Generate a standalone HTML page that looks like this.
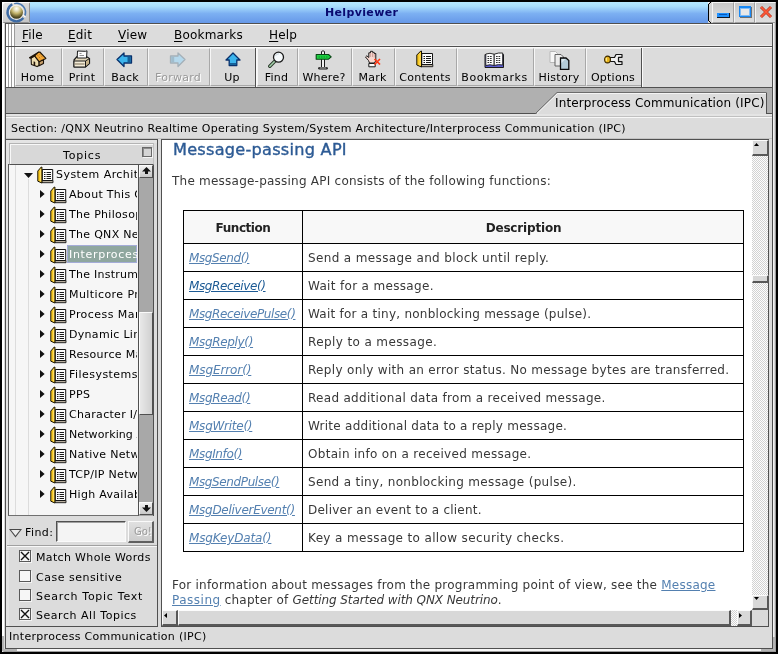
<!DOCTYPE html>
<html><head><meta charset="utf-8"><title>Helpviewer</title><style>

*{box-sizing:border-box;margin:0;padding:0}
html,body{width:778px;height:654px;overflow:hidden;background:#000}
body{will-change:transform;font-family:"DejaVu Sans","Liberation Sans",sans-serif;font-size:11.5px;color:#000;position:relative}
div,span,svg{position:absolute}
.t{white-space:nowrap;line-height:1}
#frame{left:2px;top:2px;width:774px;height:650px;background:#d8d8d8;border-left:2px solid #fff;border-top:1px solid #fff;border-right:1px solid #9c9c9c;border-bottom:1px solid #9c9c9c}
#inner{left:5px;top:23px;width:768px;height:626px;background:#dcdcdc;border:1px solid #505050}
#title{left:30px;top:2px;width:678px;height:21px;background:linear-gradient(#b6e8ff 0%,#aadefc 20%,#7cb0f2 55%,#6698e8 100%)}
#title .t{left:295px;top:5px;font-weight:bold;font-size:11px;letter-spacing:.35px;color:#0a0a70}
.mi{top:29px;font-size:12px;letter-spacing:.2px}
.mi u{text-decoration:underline;text-underline-offset:2px;text-decoration-thickness:1px}
.tb{top:48px;height:38px;border-left:1px solid #f6f6f6;border-top:1px solid #f0f0f0;border-right:1px solid #a8a8a8;border-bottom:1px solid #a8a8a8;background:#dadada}
.tb .t{left:-1px;right:1px;top:23px;text-align:center;font-size:11px;letter-spacing:.25px}
.tb.dis .t{color:#9a9a9a;text-shadow:1px 1px 0 #fff}
.tb svg{top:2px;left:50%;margin-left:-10px;width:20px;height:18px}

#band{left:6px;top:88px;width:766px;height:25px;background:#b0b0b0}
.book{width:18px;height:18px}
.row{left:0;height:20px;width:127px;overflow:hidden}
.row .t{top:5px;font-size:11px;letter-spacing:.1px}
.chk{width:12px;height:12px;left:19px;background:#f6f6f6;border:1px solid #585858;box-shadow:1px 1px 0 #f4f4f4}
.cl{left:36px;font-size:11px;letter-spacing:.3px}
#doc{left:162px;top:140px;width:590px;height:470px;background:#fff;overflow:hidden;font-size:12px;letter-spacing:.23px;color:#383838}
#doc a{color:#5480b0;text-decoration:underline}
#doc .fn{font-style:italic;font-size:12px;left:27px;letter-spacing:-.38px}
#doc .ds{left:146px;font-size:12px}
.hl{height:1px;background:#000;left:21px;width:560px}
.sb2{background:#d8d8d8;border-top:1px solid #fcfcfc;border-left:1px solid #fcfcfc;border-right:2px solid #585858;border-bottom:2px solid #585858}
.sbtn{background:#dcdcdc;border:1px solid #fafafa;border-right-color:#505050;border-bottom-color:#505050}
</style></head><body>
<div id="frame"></div>
<div style="left:773px;top:23px;width:1px;height:614px;background:#f4f4f4"></div>
<div style="left:17px;top:649px;width:744px;height:2px;background:#f8f8f8"></div>
<div style="left:2px;top:636px;width:2px;height:15px;background:#b4b4b4"></div>
<div style="left:2px;top:649px;width:15px;height:2px;background:#b4b4b4"></div>
<div style="left:761px;top:649px;width:14px;height:2px;background:#b4b4b4"></div>
<div style="left:773px;top:637px;width:2px;height:13px;background:#b4b4b4"></div>
<div id="iconbox" style="left:2px;top:2px;width:28px;height:21px;background:linear-gradient(160deg,#e4e4e4,#d0d0d0 60%,#c4c4c4);border:1px solid #fcfcfc;border-right-color:#909090;border-bottom-color:#909090;border-radius:3px 2px 2px 2px"><svg style="left:-1px;top:-1px" width="28" height="21" viewBox="0 0 28 21"><defs><radialGradient id="orb" cx="50%" cy="22%" r="75%"><stop offset="0" stop-color="#ffffff"/><stop offset=".22" stop-color="#e8e4c8"/><stop offset=".5" stop-color="#c4b46c"/><stop offset=".8" stop-color="#6c6230"/><stop offset="1" stop-color="#3c3818"/></radialGradient><filter id="bl" x="-20%" y="-20%" width="140%" height="140%"><feGaussianBlur stdDeviation=".45"/></filter></defs><g filter="url(#bl)"><path d="M10.270 2.350 A9 9 0 1 0 21.390 16.090" fill="none" stroke="#3c6aa4" stroke-width="2.300"/><path d="M12.170 1.610 A9 9 0 0 1 22.660 14.100" fill="none" stroke="#4a78b0" stroke-width="1.500"/><path d="M20.500 12.500 L23.500 15" stroke="#fff" stroke-width="1.200"/><circle cx="14.500" cy="10.300" r="7.300" fill="#f4f4f4"/></g><circle cx="14.500" cy="10.300" r="6.500" fill="url(#orb)"/></svg></div>
<div id="title"><span class="t">Helpviewer</span></div>
<div style="left:709px;top:2px;width:67px;height:21px;background:#d4d4d4"></div>
<div style="left:708px;top:4px;width:1px;height:17px;background:#000"></div><div style="left:709px;top:3px;width:1px;height:1px;background:#000"></div><div style="left:710px;top:2px;width:1px;height:1px;background:#000"></div><div style="left:709px;top:21px;width:1px;height:1px;background:#000"></div><div style="left:710px;top:22px;width:1px;height:1px;background:#000"></div>
<div style="left:711px;top:2px;width:65px;height:21px;background:#d4d4d4"></div>
<div style="left:712px;top:2px;width:22px;height:21px;border:1px solid #f4f4f4;border-right-color:#a0a0a0;border-bottom-color:#a0a0a0;background:linear-gradient(#c8c8c8,#dedede)">
<div style="left:4px;top:10px;width:13px;height:5px;background:#1e90ff;border-bottom:1px solid #101828;border-right:1px solid #101828"><div style="left:2px;top:1px;width:8px;height:1px;background:#0a58b8"></div></div>
</div>
<div style="left:734px;top:2px;width:21px;height:21px;border:1px solid #f4f4f4;border-right-color:#a0a0a0;border-bottom-color:#a0a0a0;background:linear-gradient(#c8c8c8,#dedede)">
<div style="left:4px;top:3px;width:12px;height:11px;background:#e8e8e8;border:1px solid #1888f4;border-top-width:2px;box-shadow:1px 1px 0 #707070,inset 0 0 0 1px rgba(40,150,255,.55)"></div>
</div>
<div style="left:755px;top:2px;width:21px;height:21px;border:1px solid #f4f4f4;border-right-color:#a0a0a0;border-bottom-color:#a0a0a0;background:linear-gradient(#c8c8c8,#dedede)">
<svg style="left:3px;top:2px" width="14" height="14" viewBox="0 0 14 14"><path d="M2 2 L12 12 M12 2 L2 12" stroke="#b03820" stroke-width="3"/><path d="M2 2 L12 12 M12 2 L2 12" stroke="#ff5838" stroke-width="1.700"/></svg>
</div>
<div id="inner"></div>
<div style="left:6px;top:24px;width:766px;height:22px;background:#dcdcdc;border-top:1px solid #fafafa;border-bottom:1px solid #ececec"></div>
<div style="left:6px;top:46px;width:766px;height:1px;background:#505050"></div>
<div style="left:6px;top:47px;width:766px;height:1px;background:#fafafa"></div>
<div style="left:6px;top:24px;width:9px;height:22px;background:repeating-linear-gradient(90deg,#fff 0,#fff 2px,#9c9c9c 2px,#9c9c9c 3px)"></div>
<div style="left:6px;top:47px;width:9px;height:40px;background:repeating-linear-gradient(90deg,#fff 0,#fff 2px,#9c9c9c 2px,#9c9c9c 3px)"></div>
<div class="mi t" style="left:22px"><u>F</u>ile</div>
<div class="mi t" style="left:68px"><u>E</u>dit</div>
<div class="mi t" style="left:118px"><u>V</u>iew</div>
<div class="mi t" style="left:174px"><u>B</u>ookmarks</div>
<div class="mi t" style="left:269px"><u>H</u>elp</div>
<div style="left:15px;top:48px;width:757px;height:39px;background:#dcdcdc"></div>
<div style="left:6px;top:87px;width:766px;height:1px;background:#505050"></div>
<div class="tb" style="left:15px;width:47px"><span class="t">Home</span></div>
<svg style="left:29px;top:51px" width="18" height="17" viewBox="0 0 18 17"><path d="M2.100 7.100 L5.600 5 L10.100 10.500 L10.100 14.500 L8.100 15.600 L2.400 13.500 Z" fill="#ecdcb0" stroke="#1a1208" stroke-width="1.100" stroke-linejoin="round"/><path d="M10.100 10.500 L14.500 8.300 L14.500 12.500 L10.100 14.800 Z" fill="#c8a06c" stroke="#1a1208" stroke-width="1.100" stroke-linejoin="round"/><path d="M4.600 10.300 L6.200 11 L6.200 15 L4.600 14.300 Z" fill="#20140a"/><path d="M9.500 1.200 L10.800 1 L16.900 7.400 L10.100 10.700 L5.400 4.700 Z" fill="#f4aa38" stroke="#1a1208" stroke-width="1.100" stroke-linejoin="round"/><path d="M0.400 6.800 L9.500 1.200 L5.600 4.900 L1.700 7.300 Z" fill="#f4b040" stroke="#1a1208" stroke-width="1.100" stroke-linejoin="round"/><path d="M8 3.500 L12.500 8.800 M10.300 2.800 L14.800 7.600" stroke="#b87018" stroke-width=".9" stroke-dasharray="1.800 1"/></svg>
<div class="tb" style="left:62px;width:42px"><span class="t">Print</span></div>
<svg style="left:72px;top:50px" width="19" height="18" viewBox="0 0 19 18"><path d="M2 10 L5 6.500 L14.500 6.500 L17.500 8.500 L17.500 13.500 L13.500 17 L2 17 Z" fill="#e4d8bc" stroke="#1a1a1a" stroke-width="1.200"/><path d="M13.500 11 L17.500 8.500 L17.500 13.500 L13.500 17 Z" fill="#c8b48c" stroke="#1a1a1a" stroke-width="1"/><path d="M2 11 L13.500 11 L13.500 17 L2 17 Z" fill="#f4ecd8" stroke="#1a1a1a" stroke-width="1"/><path d="M3 14 L12.500 14" stroke="#8a8068" stroke-width="1.200"/><path d="M5.500 1 L13.500 1.300 L15 0.800 L14.500 8 L5.200 8 Z" fill="#fcfcfc" stroke="#1a1a1a" stroke-width="1"/><path d="M7.500 3.500 h2 M7.500 5.500 h4.500" stroke="#909090" stroke-width="1"/></svg>
<div class="tb" style="left:104px;width:44px"><span class="t">Back</span></div>
<svg style="left:116px;top:52px" width="17" height="16" viewBox="0 0 17 16"><path d="M1 7.500 L8 1 L8 4 L15.500 4 L15.500 11 L8 11 L8 14.500 Z" fill="#3cb4ec" stroke="#08306c" stroke-width="1.300" stroke-linejoin="round"/><path d="M11.500 4.700 L14.800 4.700 L14.800 10.300 L11.500 10.300 Z" fill="#146098"/></svg>
<div class="tb dis" style="left:148px;width:62px"><span class="t">Forward</span></div>
<svg style="left:169px;top:52px" width="17" height="16" viewBox="0 0 17 16"><path d="M16 7.500 L9 1 L9 4 L1.500 4 L1.500 11 L9 11 L9 14.500 Z" fill="#b4d8ec" stroke="#a4b0b8" stroke-width="1.300" stroke-linejoin="round"/><path d="M2.200 4.700 L5.200 4.700 L5.200 10.300 L2.200 10.300 Z" fill="#a0bccc"/></svg>
<div class="tb" style="left:210px;width:46px"><span class="t">Up</span></div>
<svg style="left:225px;top:52px" width="16" height="15" viewBox="0 0 16 15"><path d="M8 1 L15 8 L11.800 8 L11.800 13.500 L4.200 13.500 L4.200 8 L1 8 Z" fill="#3cb4ec" stroke="#08306c" stroke-width="1.300" stroke-linejoin="round"/><path d="M4.900 11 L11.100 11 L11.100 12.900 L4.900 12.900 Z" fill="#146098"/></svg>
<div class="tb" style="left:257px;width:41px"><span class="t">Find</span></div>
<svg style="left:268px;top:51px" width="17" height="18" viewBox="0 0 17 18"><path d="M6.500 10.500 L1.800 15.300" stroke="#2a3a2a" stroke-width="3.400" stroke-linecap="round"/><path d="M6.500 10.500 L1.800 15.300" stroke="#a4d0ac" stroke-width="1.500" stroke-linecap="round"/><circle cx="10.500" cy="6.200" r="5" fill="#f6fafc" stroke="#1a1a1a" stroke-width="1.300"/><path d="M7.500 5 A3.500 3.500 0 0 1 11 2.800" fill="none" stroke="#c8d4dc" stroke-width="1"/></svg>
<div class="tb" style="left:298px;width:54px"><span class="t">Where?</span></div>
<svg style="left:315px;top:50px" width="17" height="20" viewBox="0 0 17 20"><path d="M6.500 1.500 Q8 0 9.500 1.500 L9.500 17.500 L6.500 17.500 Z" fill="#f0f0f0" stroke="#1a1a1a" stroke-width="1"/><path d="M4.500 18.200 L11.500 18.200" stroke="#1a1a1a" stroke-width="2.600" stroke-linecap="round"/><path d="M5 18 L11 18" stroke="#c0c0c0" stroke-width="1" stroke-linecap="round"/><path d="M1.200 4.500 L13.500 4.500 L16.200 6.800 L13.500 9.200 L1.200 9.200 Z" fill="#1cd040" stroke="#084414" stroke-width="1.100" stroke-linejoin="round"/><path d="M3.500 7 h9" stroke="#0c8a28" stroke-width="1.200" stroke-dasharray="1.500 1"/></svg>
<div class="tb" style="left:352px;width:43px"><span class="t">Mark</span></div>
<svg style="left:364px;top:50px" width="18" height="18" viewBox="0 0 18 18"><path d="M4.500 10.500 L1.500 7 L2.800 5.800 L4.800 7.500 L4.800 2.800 L6.500 2.800 L6.500 1.300 L8.500 1.300 L8.500 2.300 L10.200 2.300 L10.200 3.500 L11.800 3.500 L11.800 10.500 L10.500 13 L5.500 13 Z" fill="#f8d8d0" stroke="#1a1a1a" stroke-width="1" stroke-linejoin="round"/><path d="M6.600 3 v4 M8.500 3 v4 M10.200 4 v3.500" stroke="#c89890" stroke-width=".8"/><path d="M4.800 13.500 L11.200 13.500 L11.200 16.800 L4.800 16.800 Z" fill="#fcfcfc" stroke="#1a1a1a" stroke-width="1"/><path d="M10.500 9 L16 14.500 M16 9 L10.500 14.500" stroke="#ff3814" stroke-width="1.700"/></svg>
<div class="tb" style="left:395px;width:62px"><span class="t">Contents</span></div>
<svg style="left:416px;top:50px" width="18" height="18" viewBox="0 0 18 18"><path d="M5.500 14.500 L16.800 14.500 L16.800 16.700 L5.500 16.700 Z" fill="#b8b0a0" stroke="#141414" stroke-width=".9"/><path d="M5.800 3.500 L16.500 3.500 L16.500 14.500 L5.800 14.500 Z" fill="#fdfdfd" stroke="#141414" stroke-width="1"/><path d="M0.800 5 L4.800 1 L5.500 1 L5.500 17 L0.800 15 Z" fill="#f8c820" stroke="#141000" stroke-width="1" stroke-linejoin="round"/><path d="M4 3 L4 15.500" stroke="#fde070" stroke-width="1"/><path d="M7.500 6.500 h1.500 M10 6.500 h5 M7.500 8.500 h1.500 M10 8.500 h5 M7.500 10.500 h1.500 M10 10.500 h5 M7.500 12.500 h1.500 M10 12.500 h5" stroke="#1a1a1a" stroke-width="1"/></svg>
<div class="tb" style="left:457px;width:77px"><span class="t" style="letter-spacing:.55px">Bookmarks</span></div>
<svg style="left:484px;top:51px" width="21" height="18" viewBox="0 0 21 18"><path d="M1 3.500 L19.500 3.500 L19.500 16.500 L1 16.500 Z" fill="#5c5cd0" stroke="#1a1a1a" stroke-width="1"/><path d="M1.800 3 Q6 1.500 10.200 3.200 L10.200 14.500 Q6 13 1.800 14.500 Z" fill="#fcfcfc" stroke="#1a1a1a" stroke-width=".9"/><path d="M18.700 2 Q14.500 1.500 10.200 3.200 L10.200 14.500 Q14.500 13 18.700 14 Z" fill="#fcfcfc" stroke="#1a1a1a" stroke-width=".9"/><path d="M3.500 5.500 h5 M3.500 7.500 h5 M3.500 9.500 h5 M3.500 11.500 h5 M12 5.500 h5 M12 7.500 h5 M12 9.500 h5 M12 11.500 h5" stroke="#333" stroke-width="1" stroke-dasharray="1.700 .8"/></svg>
<div class="tb" style="left:534px;width:52px"><span class="t">History</span></div>
<svg style="left:549px;top:50px" width="21" height="20" viewBox="0 0 21 20"><path d="M1 1.500 L6.500 1.500 L8.500 3.500 L8.500 12.500 L1 12.500 Z" fill="#f6f6f6" stroke="#b8b8b8" stroke-width="1"/><path d="M6 4.500 L12 4.500 L14.500 7 L14.500 16 L6 16 Z" fill="#ececec" stroke="#606060" stroke-width="1"/><path d="M11.500 8 L17 8 L19.800 10.500 L19.800 19.300 L11.500 19.300 Z" fill="#b4ccd8" stroke="#0a0a0a" stroke-width="1.300"/><path d="M12.500 9 L16.500 9 L12.500 13 Z" fill="#dce8ee"/></svg>
<div class="tb" style="left:586px;width:56px"><span class="t">Options</span></div>
<svg style="left:604px;top:53px" width="19" height="13" viewBox="0 0 19 13"><path d="M6 4.500 L10.500 4.500 L12 1.500 L18 1.500 L18 4.300 L14.500 4.300 L14.500 8.700 L18 8.700 L18 11.500 L12 11.500 L10.500 8.500 L6 8.500 Z" fill="#f0f0f0" stroke="#141414" stroke-width="1.200" stroke-linejoin="round"/><ellipse cx="3.500" cy="6.500" rx="2.900" ry="3.400" fill="#e8b41c" stroke="#3a2800" stroke-width="1.100"/><path d="M2.300 4.800 v3.400" stroke="#fff4a8" stroke-width="1"/></svg>
<div style="left:255px;top:48px;width:1px;height:39px;background:#505050"></div>
<div style="left:256px;top:48px;width:1px;height:39px;background:#fafafa"></div>
<div style="left:641px;top:48px;width:1px;height:39px;background:#505050"></div>
<div style="left:642px;top:48px;width:1px;height:39px;background:#fafafa"></div>
<div id="band"></div>
<div style="left:6px;top:113px;width:531px;height:1px;background:#505050"></div>
<div style="left:6px;top:114px;width:766px;height:2px;background:#e4e4e4"></div>
<div style="left:6px;top:116px;width:766px;height:1px;background:#c0c0c0"></div>
<div style="left:6px;top:117px;width:766px;height:1px;background:#f8f8f8"></div>
<svg style="left:530px;top:88px" width="242" height="29" viewBox="0 0 242 29"><path d="M6 26 L27.500 4.500 L236.500 4.500 L236.500 26 Z" fill="#dcdcdc"/><path d="M7 25.500 L27.500 5.500 L236 5.500" fill="none" stroke="#f4f4f4" stroke-width="1"/><path d="M5.500 25.500 L27 4.500 L236 4.500" fill="none" stroke="#6c6c6c" stroke-width="1"/><path d="M236.500 4.500 L236.500 26" stroke="#505050" stroke-width="1"/><path d="M237 25.500 L242 25.500" stroke="#505050" stroke-width="1"/></svg>
<div class="t" style="left:555px;top:97px;font-size:12px;letter-spacing:.14px">Interprocess Communication (IPC)</div>
<div class="t" style="left:11px;top:123px;font-size:11px;letter-spacing:.25px">Section: /QNX Neutrino Realtime Operating System/System Architecture/Interprocess Communication (IPC)</div>
<div style="left:6px;top:138px;width:766px;height:1px;background:#c4c4c4"></div>
<div style="left:6px;top:139px;width:152px;height:488px;background:#dcdcdc;border-top:1px solid #505050;border-right:1px solid #505050;border-bottom:1px solid #505050"></div>
<div style="left:6px;top:140px;width:151px;height:3px;background:#e4e4e4"></div><div style="left:6px;top:140px;width:3px;height:486px;background:#e4e4e4"></div>
<div style="left:9px;top:143px;width:145px;height:22px;background:#d8d8d8;border:1px solid #b4b4b4;border-bottom-color:#505050;border-right-color:#c0c0c0;box-shadow:inset 1px 1px 0 #f8f8f8"></div><div style="left:8px;top:164px;width:1px;height:1px;background:#505050"></div>
<div class="t" style="left:63px;top:150px;font-size:11px;letter-spacing:.8px">Topics</div>
<div style="left:142px;top:147px;width:10px;height:10px;border:1px solid #686868;box-shadow:inset 1px 1px 0 #8c8c8c,1px 1px 0 #f4f4f4;background:#d4d4d4"></div>
<div id="tree" style="left:8px;top:165px;width:131px;height:351px;background:#f6f6f6;border-left:1px solid #585858;border-right:1px solid #505050;border-bottom:1px solid #707070;overflow:hidden"><div style="left:1px;top:0;width:128px;height:350px">
<div style="left:5px;top:0;width:1px;height:350px;background:#dcdcdc"></div>
<div style="left:18px;top:14px;width:1px;height:336px;background:#dcdcdc"></div>
<div class="row" style="top:-1px"><svg style="left:14px;top:9px" width="9" height="5" viewBox="0 0 9 5"><path d="M0 0 L9 0 L4.500 5 Z" fill="#111"/></svg><span style="left:27px;top:2px"><svg width="17" height="18" viewBox="0 0 17 18"><path d="M4.800 14.500 L16 14.500 L16 16.700 L4.800 16.700 Z" fill="#b8b0a0" stroke="#141414" stroke-width=".9"/><path d="M5.300 3.500 L15.700 3.500 L15.700 14.500 L5.300 14.500 Z" fill="#fdfdfd" stroke="#141414" stroke-width="1"/><path d="M0.800 5 L4.300 1 L4.900 1 L4.900 17 L0.800 15.200 Z" fill="#f8c820" stroke="#141000" stroke-width="1" stroke-linejoin="round"/><path d="M3.600 3 L3.600 15.500" stroke="#fde070" stroke-width="1"/><path d="M7 6.500 h1.500 M9.500 6.500 h4.500 M7 8.500 h1.500 M9.500 8.500 h4.500 M7 10.500 h1.500 M9.500 10.500 h4.500 M7 12.500 h1.500 M9.500 12.500 h4.500" stroke="#1a1a1a" stroke-width="1"/></svg></span><span class="t" style="left:46px;letter-spacing:.45px">System Architecture</span></div>
<div class="row" style="top:19px"><svg style="left:30px;top:6px" width="5" height="8" viewBox="0 0 5 8"><path d="M0 0 L4.600 4 L0 8 Z" fill="#111"/></svg><span style="left:40px;top:2px"><svg width="17" height="18" viewBox="0 0 17 18"><path d="M4.800 14.500 L16 14.500 L16 16.700 L4.800 16.700 Z" fill="#b8b0a0" stroke="#141414" stroke-width=".9"/><path d="M5.300 3.500 L15.700 3.500 L15.700 14.500 L5.300 14.500 Z" fill="#fdfdfd" stroke="#141414" stroke-width="1"/><path d="M0.800 5 L4.300 1 L4.900 1 L4.900 17 L0.800 15.200 Z" fill="#f8c820" stroke="#141000" stroke-width="1" stroke-linejoin="round"/><path d="M3.600 3 L3.600 15.500" stroke="#fde070" stroke-width="1"/><path d="M7 6.500 h1.500 M9.500 6.500 h4.500 M7 8.500 h1.500 M9.500 8.500 h4.500 M7 10.500 h1.500 M9.500 10.500 h4.500 M7 12.500 h1.500 M9.500 12.500 h4.500" stroke="#1a1a1a" stroke-width="1"/></svg></span><span class="t" style="left:59px;letter-spacing:0.3px">About This Guide</span></div>
<div class="row" style="top:39px"><svg style="left:30px;top:6px" width="5" height="8" viewBox="0 0 5 8"><path d="M0 0 L4.600 4 L0 8 Z" fill="#111"/></svg><span style="left:40px;top:2px"><svg width="17" height="18" viewBox="0 0 17 18"><path d="M4.800 14.500 L16 14.500 L16 16.700 L4.800 16.700 Z" fill="#b8b0a0" stroke="#141414" stroke-width=".9"/><path d="M5.300 3.500 L15.700 3.500 L15.700 14.500 L5.300 14.500 Z" fill="#fdfdfd" stroke="#141414" stroke-width="1"/><path d="M0.800 5 L4.300 1 L4.900 1 L4.900 17 L0.800 15.200 Z" fill="#f8c820" stroke="#141000" stroke-width="1" stroke-linejoin="round"/><path d="M3.600 3 L3.600 15.500" stroke="#fde070" stroke-width="1"/><path d="M7 6.500 h1.500 M9.500 6.500 h4.500 M7 8.500 h1.500 M9.500 8.500 h4.500 M7 10.500 h1.500 M9.500 10.500 h4.500 M7 12.500 h1.500 M9.500 12.500 h4.500" stroke="#1a1a1a" stroke-width="1"/></svg></span><span class="t" style="left:59px;letter-spacing:0.3px">The Philosophy of QNX</span></div>
<div class="row" style="top:59px"><svg style="left:30px;top:6px" width="5" height="8" viewBox="0 0 5 8"><path d="M0 0 L4.600 4 L0 8 Z" fill="#111"/></svg><span style="left:40px;top:2px"><svg width="17" height="18" viewBox="0 0 17 18"><path d="M4.800 14.500 L16 14.500 L16 16.700 L4.800 16.700 Z" fill="#b8b0a0" stroke="#141414" stroke-width=".9"/><path d="M5.300 3.500 L15.700 3.500 L15.700 14.500 L5.300 14.500 Z" fill="#fdfdfd" stroke="#141414" stroke-width="1"/><path d="M0.800 5 L4.300 1 L4.900 1 L4.900 17 L0.800 15.200 Z" fill="#f8c820" stroke="#141000" stroke-width="1" stroke-linejoin="round"/><path d="M3.600 3 L3.600 15.500" stroke="#fde070" stroke-width="1"/><path d="M7 6.500 h1.500 M9.500 6.500 h4.500 M7 8.500 h1.500 M9.500 8.500 h4.500 M7 10.500 h1.500 M9.500 10.500 h4.500 M7 12.500 h1.500 M9.500 12.500 h4.500" stroke="#1a1a1a" stroke-width="1"/></svg></span><span class="t" style="left:59px;letter-spacing:0.3px">The QNX Neutrino Microkernel</span></div>
<div class="row" style="top:79px"><svg style="left:30px;top:6px" width="5" height="8" viewBox="0 0 5 8"><path d="M0 0 L4.600 4 L0 8 Z" fill="#111"/></svg><span style="left:40px;top:2px"><svg width="17" height="18" viewBox="0 0 17 18"><path d="M4.800 14.500 L16 14.500 L16 16.700 L4.800 16.700 Z" fill="#b8b0a0" stroke="#141414" stroke-width=".9"/><path d="M5.300 3.500 L15.700 3.500 L15.700 14.500 L5.300 14.500 Z" fill="#fdfdfd" stroke="#141414" stroke-width="1"/><path d="M0.800 5 L4.300 1 L4.900 1 L4.900 17 L0.800 15.200 Z" fill="#f8c820" stroke="#141000" stroke-width="1" stroke-linejoin="round"/><path d="M3.600 3 L3.600 15.500" stroke="#fde070" stroke-width="1"/><path d="M7 6.500 h1.500 M9.500 6.500 h4.500 M7 8.500 h1.500 M9.500 8.500 h4.500 M7 10.500 h1.500 M9.500 10.500 h4.500 M7 12.500 h1.500 M9.500 12.500 h4.500" stroke="#1a1a1a" stroke-width="1"/></svg></span><span style="left:57px;top:1px;width:70px;height:18px;background:#8fa79f;border:1px solid #a4acd8"></span><span class="t" style="left:59px;color:#fff;letter-spacing:0.68px">Interprocess Communication (IPC)</span></div>
<div class="row" style="top:99px"><svg style="left:30px;top:6px" width="5" height="8" viewBox="0 0 5 8"><path d="M0 0 L4.600 4 L0 8 Z" fill="#111"/></svg><span style="left:40px;top:2px"><svg width="17" height="18" viewBox="0 0 17 18"><path d="M4.800 14.500 L16 14.500 L16 16.700 L4.800 16.700 Z" fill="#b8b0a0" stroke="#141414" stroke-width=".9"/><path d="M5.300 3.500 L15.700 3.500 L15.700 14.500 L5.300 14.500 Z" fill="#fdfdfd" stroke="#141414" stroke-width="1"/><path d="M0.800 5 L4.300 1 L4.900 1 L4.900 17 L0.800 15.200 Z" fill="#f8c820" stroke="#141000" stroke-width="1" stroke-linejoin="round"/><path d="M3.600 3 L3.600 15.500" stroke="#fde070" stroke-width="1"/><path d="M7 6.500 h1.500 M9.500 6.500 h4.500 M7 8.500 h1.500 M9.500 8.500 h4.500 M7 10.500 h1.500 M9.500 10.500 h4.500 M7 12.500 h1.500 M9.500 12.500 h4.500" stroke="#1a1a1a" stroke-width="1"/></svg></span><span class="t" style="left:59px;letter-spacing:0.25px">The Instrumented Microkernel</span></div>
<div class="row" style="top:119px"><svg style="left:30px;top:6px" width="5" height="8" viewBox="0 0 5 8"><path d="M0 0 L4.600 4 L0 8 Z" fill="#111"/></svg><span style="left:40px;top:2px"><svg width="17" height="18" viewBox="0 0 17 18"><path d="M4.800 14.500 L16 14.500 L16 16.700 L4.800 16.700 Z" fill="#b8b0a0" stroke="#141414" stroke-width=".9"/><path d="M5.300 3.500 L15.700 3.500 L15.700 14.500 L5.300 14.500 Z" fill="#fdfdfd" stroke="#141414" stroke-width="1"/><path d="M0.800 5 L4.300 1 L4.900 1 L4.900 17 L0.800 15.200 Z" fill="#f8c820" stroke="#141000" stroke-width="1" stroke-linejoin="round"/><path d="M3.600 3 L3.600 15.500" stroke="#fde070" stroke-width="1"/><path d="M7 6.500 h1.500 M9.500 6.500 h4.500 M7 8.500 h1.500 M9.500 8.500 h4.500 M7 10.500 h1.500 M9.500 10.500 h4.500 M7 12.500 h1.500 M9.500 12.500 h4.500" stroke="#1a1a1a" stroke-width="1"/></svg></span><span class="t" style="left:59px;letter-spacing:0.42px">Multicore Processing</span></div>
<div class="row" style="top:139px"><svg style="left:30px;top:6px" width="5" height="8" viewBox="0 0 5 8"><path d="M0 0 L4.600 4 L0 8 Z" fill="#111"/></svg><span style="left:40px;top:2px"><svg width="17" height="18" viewBox="0 0 17 18"><path d="M4.800 14.500 L16 14.500 L16 16.700 L4.800 16.700 Z" fill="#b8b0a0" stroke="#141414" stroke-width=".9"/><path d="M5.300 3.500 L15.700 3.500 L15.700 14.500 L5.300 14.500 Z" fill="#fdfdfd" stroke="#141414" stroke-width="1"/><path d="M0.800 5 L4.300 1 L4.900 1 L4.900 17 L0.800 15.200 Z" fill="#f8c820" stroke="#141000" stroke-width="1" stroke-linejoin="round"/><path d="M3.600 3 L3.600 15.500" stroke="#fde070" stroke-width="1"/><path d="M7 6.500 h1.500 M9.500 6.500 h4.500 M7 8.500 h1.500 M9.500 8.500 h4.500 M7 10.500 h1.500 M9.500 10.500 h4.500 M7 12.500 h1.500 M9.500 12.500 h4.500" stroke="#1a1a1a" stroke-width="1"/></svg></span><span class="t" style="left:59px;letter-spacing:0.45px">Process Manager</span></div>
<div class="row" style="top:159px"><svg style="left:30px;top:6px" width="5" height="8" viewBox="0 0 5 8"><path d="M0 0 L4.600 4 L0 8 Z" fill="#111"/></svg><span style="left:40px;top:2px"><svg width="17" height="18" viewBox="0 0 17 18"><path d="M4.800 14.500 L16 14.500 L16 16.700 L4.800 16.700 Z" fill="#b8b0a0" stroke="#141414" stroke-width=".9"/><path d="M5.300 3.500 L15.700 3.500 L15.700 14.500 L5.300 14.500 Z" fill="#fdfdfd" stroke="#141414" stroke-width="1"/><path d="M0.800 5 L4.300 1 L4.900 1 L4.900 17 L0.800 15.200 Z" fill="#f8c820" stroke="#141000" stroke-width="1" stroke-linejoin="round"/><path d="M3.600 3 L3.600 15.500" stroke="#fde070" stroke-width="1"/><path d="M7 6.500 h1.500 M9.500 6.500 h4.500 M7 8.500 h1.500 M9.500 8.500 h4.500 M7 10.500 h1.500 M9.500 10.500 h4.500 M7 12.500 h1.500 M9.500 12.500 h4.500" stroke="#1a1a1a" stroke-width="1"/></svg></span><span class="t" style="left:59px;letter-spacing:0.3px">Dynamic Linking</span></div>
<div class="row" style="top:179px"><svg style="left:30px;top:6px" width="5" height="8" viewBox="0 0 5 8"><path d="M0 0 L4.600 4 L0 8 Z" fill="#111"/></svg><span style="left:40px;top:2px"><svg width="17" height="18" viewBox="0 0 17 18"><path d="M4.800 14.500 L16 14.500 L16 16.700 L4.800 16.700 Z" fill="#b8b0a0" stroke="#141414" stroke-width=".9"/><path d="M5.300 3.500 L15.700 3.500 L15.700 14.500 L5.300 14.500 Z" fill="#fdfdfd" stroke="#141414" stroke-width="1"/><path d="M0.800 5 L4.300 1 L4.900 1 L4.900 17 L0.800 15.200 Z" fill="#f8c820" stroke="#141000" stroke-width="1" stroke-linejoin="round"/><path d="M3.600 3 L3.600 15.500" stroke="#fde070" stroke-width="1"/><path d="M7 6.500 h1.500 M9.500 6.500 h4.500 M7 8.500 h1.500 M9.500 8.500 h4.500 M7 10.500 h1.500 M9.500 10.500 h4.500 M7 12.500 h1.500 M9.500 12.500 h4.500" stroke="#1a1a1a" stroke-width="1"/></svg></span><span class="t" style="left:59px;letter-spacing:0.3px">Resource Managers</span></div>
<div class="row" style="top:199px"><svg style="left:30px;top:6px" width="5" height="8" viewBox="0 0 5 8"><path d="M0 0 L4.600 4 L0 8 Z" fill="#111"/></svg><span style="left:40px;top:2px"><svg width="17" height="18" viewBox="0 0 17 18"><path d="M4.800 14.500 L16 14.500 L16 16.700 L4.800 16.700 Z" fill="#b8b0a0" stroke="#141414" stroke-width=".9"/><path d="M5.300 3.500 L15.700 3.500 L15.700 14.500 L5.300 14.500 Z" fill="#fdfdfd" stroke="#141414" stroke-width="1"/><path d="M0.800 5 L4.300 1 L4.900 1 L4.900 17 L0.800 15.200 Z" fill="#f8c820" stroke="#141000" stroke-width="1" stroke-linejoin="round"/><path d="M3.600 3 L3.600 15.500" stroke="#fde070" stroke-width="1"/><path d="M7 6.500 h1.500 M9.500 6.500 h4.500 M7 8.500 h1.500 M9.500 8.500 h4.500 M7 10.500 h1.500 M9.500 10.500 h4.500 M7 12.500 h1.500 M9.500 12.500 h4.500" stroke="#1a1a1a" stroke-width="1"/></svg></span><span class="t" style="left:59px;letter-spacing:0.46px">Filesystems</span></div>
<div class="row" style="top:219px"><svg style="left:30px;top:6px" width="5" height="8" viewBox="0 0 5 8"><path d="M0 0 L4.600 4 L0 8 Z" fill="#111"/></svg><span style="left:40px;top:2px"><svg width="17" height="18" viewBox="0 0 17 18"><path d="M4.800 14.500 L16 14.500 L16 16.700 L4.800 16.700 Z" fill="#b8b0a0" stroke="#141414" stroke-width=".9"/><path d="M5.300 3.500 L15.700 3.500 L15.700 14.500 L5.300 14.500 Z" fill="#fdfdfd" stroke="#141414" stroke-width="1"/><path d="M0.800 5 L4.300 1 L4.900 1 L4.900 17 L0.800 15.200 Z" fill="#f8c820" stroke="#141000" stroke-width="1" stroke-linejoin="round"/><path d="M3.600 3 L3.600 15.500" stroke="#fde070" stroke-width="1"/><path d="M7 6.500 h1.500 M9.500 6.500 h4.500 M7 8.500 h1.500 M9.500 8.500 h4.500 M7 10.500 h1.500 M9.500 10.500 h4.500 M7 12.500 h1.500 M9.500 12.500 h4.500" stroke="#1a1a1a" stroke-width="1"/></svg></span><span class="t" style="left:59px;letter-spacing:0.35px">PPS</span></div>
<div class="row" style="top:239px"><svg style="left:30px;top:6px" width="5" height="8" viewBox="0 0 5 8"><path d="M0 0 L4.600 4 L0 8 Z" fill="#111"/></svg><span style="left:40px;top:2px"><svg width="17" height="18" viewBox="0 0 17 18"><path d="M4.800 14.500 L16 14.500 L16 16.700 L4.800 16.700 Z" fill="#b8b0a0" stroke="#141414" stroke-width=".9"/><path d="M5.300 3.500 L15.700 3.500 L15.700 14.500 L5.300 14.500 Z" fill="#fdfdfd" stroke="#141414" stroke-width="1"/><path d="M0.800 5 L4.300 1 L4.900 1 L4.900 17 L0.800 15.200 Z" fill="#f8c820" stroke="#141000" stroke-width="1" stroke-linejoin="round"/><path d="M3.600 3 L3.600 15.500" stroke="#fde070" stroke-width="1"/><path d="M7 6.500 h1.500 M9.500 6.500 h4.500 M7 8.500 h1.500 M9.500 8.500 h4.500 M7 10.500 h1.500 M9.500 10.500 h4.500 M7 12.500 h1.500 M9.500 12.500 h4.500" stroke="#1a1a1a" stroke-width="1"/></svg></span><span class="t" style="left:59px;letter-spacing:0.3px">Character I/O</span></div>
<div class="row" style="top:259px"><svg style="left:30px;top:6px" width="5" height="8" viewBox="0 0 5 8"><path d="M0 0 L4.600 4 L0 8 Z" fill="#111"/></svg><span style="left:40px;top:2px"><svg width="17" height="18" viewBox="0 0 17 18"><path d="M4.800 14.500 L16 14.500 L16 16.700 L4.800 16.700 Z" fill="#b8b0a0" stroke="#141414" stroke-width=".9"/><path d="M5.300 3.500 L15.700 3.500 L15.700 14.500 L5.300 14.500 Z" fill="#fdfdfd" stroke="#141414" stroke-width="1"/><path d="M0.800 5 L4.300 1 L4.900 1 L4.900 17 L0.800 15.200 Z" fill="#f8c820" stroke="#141000" stroke-width="1" stroke-linejoin="round"/><path d="M3.600 3 L3.600 15.500" stroke="#fde070" stroke-width="1"/><path d="M7 6.500 h1.500 M9.500 6.500 h4.500 M7 8.500 h1.500 M9.500 8.500 h4.500 M7 10.500 h1.500 M9.500 10.500 h4.500 M7 12.500 h1.500 M9.500 12.500 h4.500" stroke="#1a1a1a" stroke-width="1"/></svg></span><span class="t" style="left:59px;letter-spacing:0.1px">Networking Architecture</span></div>
<div class="row" style="top:279px"><svg style="left:30px;top:6px" width="5" height="8" viewBox="0 0 5 8"><path d="M0 0 L4.600 4 L0 8 Z" fill="#111"/></svg><span style="left:40px;top:2px"><svg width="17" height="18" viewBox="0 0 17 18"><path d="M4.800 14.500 L16 14.500 L16 16.700 L4.800 16.700 Z" fill="#b8b0a0" stroke="#141414" stroke-width=".9"/><path d="M5.300 3.500 L15.700 3.500 L15.700 14.500 L5.300 14.500 Z" fill="#fdfdfd" stroke="#141414" stroke-width="1"/><path d="M0.800 5 L4.300 1 L4.900 1 L4.900 17 L0.800 15.200 Z" fill="#f8c820" stroke="#141000" stroke-width="1" stroke-linejoin="round"/><path d="M3.600 3 L3.600 15.500" stroke="#fde070" stroke-width="1"/><path d="M7 6.500 h1.500 M9.500 6.500 h4.500 M7 8.500 h1.500 M9.500 8.500 h4.500 M7 10.500 h1.500 M9.500 10.500 h4.500 M7 12.500 h1.500 M9.500 12.500 h4.500" stroke="#1a1a1a" stroke-width="1"/></svg></span><span class="t" style="left:59px;letter-spacing:0.3px">Native Networking (Qnet)</span></div>
<div class="row" style="top:299px"><svg style="left:30px;top:6px" width="5" height="8" viewBox="0 0 5 8"><path d="M0 0 L4.600 4 L0 8 Z" fill="#111"/></svg><span style="left:40px;top:2px"><svg width="17" height="18" viewBox="0 0 17 18"><path d="M4.800 14.500 L16 14.500 L16 16.700 L4.800 16.700 Z" fill="#b8b0a0" stroke="#141414" stroke-width=".9"/><path d="M5.300 3.500 L15.700 3.500 L15.700 14.500 L5.300 14.500 Z" fill="#fdfdfd" stroke="#141414" stroke-width="1"/><path d="M0.800 5 L4.300 1 L4.900 1 L4.900 17 L0.800 15.200 Z" fill="#f8c820" stroke="#141000" stroke-width="1" stroke-linejoin="round"/><path d="M3.600 3 L3.600 15.500" stroke="#fde070" stroke-width="1"/><path d="M7 6.500 h1.500 M9.500 6.500 h4.500 M7 8.500 h1.500 M9.500 8.500 h4.500 M7 10.500 h1.500 M9.500 10.500 h4.500 M7 12.500 h1.500 M9.500 12.500 h4.500" stroke="#1a1a1a" stroke-width="1"/></svg></span><span class="t" style="left:59px;letter-spacing:0.3px">TCP/IP Networking</span></div>
<div class="row" style="top:319px"><svg style="left:30px;top:6px" width="5" height="8" viewBox="0 0 5 8"><path d="M0 0 L4.600 4 L0 8 Z" fill="#111"/></svg><span style="left:40px;top:2px"><svg width="17" height="18" viewBox="0 0 17 18"><path d="M4.800 14.500 L16 14.500 L16 16.700 L4.800 16.700 Z" fill="#b8b0a0" stroke="#141414" stroke-width=".9"/><path d="M5.300 3.500 L15.700 3.500 L15.700 14.500 L5.300 14.500 Z" fill="#fdfdfd" stroke="#141414" stroke-width="1"/><path d="M0.800 5 L4.300 1 L4.900 1 L4.900 17 L0.800 15.200 Z" fill="#f8c820" stroke="#141000" stroke-width="1" stroke-linejoin="round"/><path d="M3.600 3 L3.600 15.500" stroke="#fde070" stroke-width="1"/><path d="M7 6.500 h1.500 M9.500 6.500 h4.500 M7 8.500 h1.500 M9.500 8.500 h4.500 M7 10.500 h1.500 M9.500 10.500 h4.500 M7 12.500 h1.500 M9.500 12.500 h4.500" stroke="#1a1a1a" stroke-width="1"/></svg></span><span class="t" style="left:59px;letter-spacing:0.3px">High Availability</span></div>
</div></div>
<div style="left:139px;top:165px;width:15px;height:351px;background:#a8a8a8;border-right:1px solid #505050"></div>
<div class="sbtn" style="left:139px;top:165px;width:14px;height:13px;background:linear-gradient(#f0f0f0,#c8c8c8)"><svg style="left:2px;top:1px" width="9" height="8" viewBox="0 0 9 8"><path d="M4.500 0 L9 4.500 L6 4.500 L6 7 L3 7 L3 4.500 L0 4.500 Z" fill="#111"/></svg></div>
<div class="sbtn" style="left:139px;top:312px;width:14px;height:103px;background:linear-gradient(90deg,#e8e8e8,#d0d0d0)"></div>
<div class="sbtn" style="left:139px;top:502px;width:14px;height:13px;background:linear-gradient(#f0f0f0,#c8c8c8)"><svg style="left:2px;top:1px" width="9" height="8" viewBox="0 0 9 8"><path d="M4.500 8 L9 3.500 L6 3.500 L6 1 L3 1 L3 3.500 L0 3.500 Z" fill="#111"/></svg></div>
<svg style="left:9px;top:528px" width="13" height="10" viewBox="0 0 13 10"><path d="M1 1.500 L12 1.500 L6.500 8.500 Z" fill="#ececec" stroke="#484848" stroke-width="1.100"/></svg>
<div class="t" style="left:25px;top:527px;font-size:11px;letter-spacing:.4px">Find:</div>
<div style="left:56px;top:521px;width:70px;height:21px;background:#f4f4f4;border:1px solid #505050;border-right-color:#fafafa;border-bottom-color:#fafafa;box-shadow:inset 1px 1px 0 #a0a0a0"></div>
<div style="left:128px;top:521px;width:26px;height:22px;background:linear-gradient(#e0e0e0,#cccccc);border:1px solid #fafafa;border-right:2px solid #606060;border-bottom:2px solid #606060"></div>
<div class="t" style="left:134px;top:527px;font-size:10px;color:#9a9a9a;text-shadow:1px 1px 0 #fff">Go!</div>
<div style="left:7px;top:545px;width:150px;height:1px;background:#a0a0a0"></div>
<div style="left:7px;top:546px;width:150px;height:1px;background:#f8f8f8"></div>
<div class="chk" style="top:550px"><svg style="left:0;top:0" width="10" height="10" viewBox="0 0 10 10"><path d="M1 1 L9 9 M9 1 L1 9" stroke="#111" stroke-width="1.400"/></svg></div><div class="t cl" style="top:552px;letter-spacing:0.34px">Match Whole Words</div>
<div class="chk" style="top:570px"></div><div class="t cl" style="top:572px;letter-spacing:0.5px">Case sensitive</div>
<div class="chk" style="top:589px"></div><div class="t cl" style="top:591px;letter-spacing:0.72px">Search Topic Text</div>
<div class="chk" style="top:608px"><svg style="left:0;top:0" width="10" height="10" viewBox="0 0 10 10"><path d="M1 1 L9 9 M9 1 L1 9" stroke="#111" stroke-width="1.400"/></svg></div><div class="t cl" style="top:610px;letter-spacing:0.53px">Search All Topics</div>
<div style="left:161px;top:139px;width:608px;height:488px;background:#dcdcdc;border:1px solid #505050;border-right:none"></div>
<div id="doc"><div style="left:0;top:1px;width:590px;height:469px">
<div class="t" style="left:11px;top:2px;font-size:15px;letter-spacing:.24px;transform:scaleX(1.075);transform-origin:0 0;-webkit-text-stroke:.35px #2c5a94;color:#2c5a94">Message-passing API</div>
<div class="t" style="left:10px;top:34px">The message-passing API consists of the following functions:</div>
<div style="left:21px;top:69px;width:561px;height:342px;border:1px solid #000"></div>
<div style="left:22px;top:70px;width:559px;height:32px;background:#f8f8f8"></div>
<div style="left:140px;top:69px;width:1px;height:342px;background:#000"></div>
<div class="t" style="left:22px;width:118px;text-align:center;top:81px;font-weight:bold;color:#222;font-size:12px;letter-spacing:-.45px">Function</div>
<div class="t" style="left:141px;width:441px;text-align:center;top:81px;font-weight:bold;color:#222;font-size:12px;letter-spacing:-.18px">Description</div>
<div class="hl" style="top:102px"></div>
<div class="t fn" style="top:111px;letter-spacing:-0.380px"><a>MsgSend()</a></div><div class="t ds" style="top:111px;letter-spacing:0.365px">Send a message and block until reply.</div>
<div class="hl" style="top:130px"></div>
<div class="t fn" style="top:139px;letter-spacing:-0.380px"><a style="color:#1c5a94">MsgReceive()</a></div><div class="t ds" style="top:139px;letter-spacing:0.330px">Wait for a message.</div>
<div class="hl" style="top:158px"></div>
<div class="t fn" style="top:167px;letter-spacing:-0.380px"><a>MsgReceivePulse()</a></div><div class="t ds" style="top:167px;letter-spacing:0.250px">Wait for a tiny, nonblocking message (pulse).</div>
<div class="hl" style="top:186px"></div>
<div class="t fn" style="top:195px;letter-spacing:-0.330px"><a>MsgReply()</a></div><div class="t ds" style="top:195px;letter-spacing:0.390px">Reply to a message.</div>
<div class="hl" style="top:214px"></div>
<div class="t fn" style="top:223px;letter-spacing:-0.100px"><a>MsgError()</a></div><div class="t ds" style="top:223px;letter-spacing:0.320px">Reply only with an error status. No message bytes are transferred.</div>
<div class="hl" style="top:242px"></div>
<div class="t fn" style="top:251px;letter-spacing:-0.330px"><a>MsgRead()</a></div><div class="t ds" style="top:251px;letter-spacing:0.300px">Read additional data from a received message.</div>
<div class="hl" style="top:270px"></div>
<div class="t fn" style="top:279px;letter-spacing:-0.230px"><a>MsgWrite()</a></div><div class="t ds" style="top:279px;letter-spacing:0.260px">Write additional data to a reply message.</div>
<div class="hl" style="top:298px"></div>
<div class="t fn" style="top:307px;letter-spacing:-0.350px"><a>MsgInfo()</a></div><div class="t ds" style="top:307px;letter-spacing:0.300px">Obtain info on a received message.</div>
<div class="hl" style="top:326px"></div>
<div class="t fn" style="top:335px;letter-spacing:-0.380px"><a>MsgSendPulse()</a></div><div class="t ds" style="top:335px;letter-spacing:0.320px">Send a tiny, nonblocking message (pulse).</div>
<div class="hl" style="top:354px"></div>
<div class="t fn" style="top:363px;letter-spacing:-0.280px"><a>MsgDeliverEvent()</a></div><div class="t ds" style="top:363px;letter-spacing:0.230px">Deliver an event to a client.</div>
<div class="hl" style="top:382px"></div>
<div class="t fn" style="top:391px;letter-spacing:-0.150px"><a>MsgKeyData()</a></div><div class="t ds" style="top:391px;letter-spacing:0.360px">Key a message to allow security checks.</div>
<div class="t" style="left:10px;top:438px">For information about messages from the programming point of view, see the <a>Message</a></div>
<div class="t" style="left:10px;top:453px"><a style="letter-spacing:.5px">Passing</a> chapter of <i style="letter-spacing:-.09px">Getting Started with QNX Neutrino</i>.</div>
</div></div>
<div style="left:752px;top:140px;width:17px;height:470px;background:repeating-conic-gradient(#fdfdfd 0 25%,#d2d2d2 0 50%) 0 0/2px 2px;border-right:1px solid #505050"></div>
<div class="sb2" style="left:752px;top:140px;width:17px;height:16px"><svg style="left:1px;top:2px" width="5" height="3" viewBox="0 0 5 3"><path d="M0 3 L2.500 0 L5 3 Z" fill="#000"/></svg></div>
<div class="sb2" style="left:752px;top:275px;width:17px;height:8px"></div>
<div class="sb2" style="left:752px;top:595px;width:17px;height:15px"><svg style="left:1px;top:1px" width="5" height="3" viewBox="0 0 5 3"><path d="M0 0 L2.500 3 L5 0 Z" fill="#000"/></svg></div>
<div style="left:162px;top:610px;width:590px;height:16px;background:repeating-conic-gradient(#fdfdfd 0 25%,#d2d2d2 0 50%) 0 0/2px 2px"></div>
<div class="sb2" style="left:162px;top:610px;width:16px;height:16px"><svg style="left:1px;top:2px" width="3" height="5" viewBox="0 0 3 5"><path d="M3 0 L0 2.500 L3 5 Z" fill="#000"/></svg></div>
<div class="sb2" style="left:178px;top:610px;width:553px;height:16px"></div>
<div class="sb2" style="left:737px;top:610px;width:15px;height:16px"><svg style="left:1px;top:2px" width="3" height="5" viewBox="0 0 3 5"><path d="M0 0 L3 2.500 L0 5 Z" fill="#000"/></svg></div>
<div style="left:752px;top:610px;width:17px;height:16px;background:#dadada;border-right:1px solid #505050"></div>
<div class="t" style="left:9px;top:631px;font-size:11px;letter-spacing:.3px">Interprocess Communication (IPC)</div>
</body></html>
